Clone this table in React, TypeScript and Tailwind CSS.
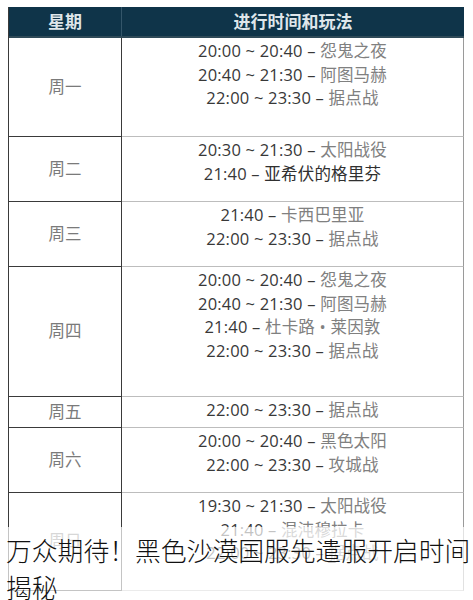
const font = { fontFamily: '"Open Sans", "Noto Sans CJK SC", sans-serif' };

type Line = { time: string; name: string; strong?: boolean };
type Row = { day: string; h: string; lines: Line[] };

const rows: Row[] = [
  {
    day: "周一",
    h: "h-[99px]",
    lines: [
      { time: "20:00 ~ 20:40 – ", name: "怨鬼之夜" },
      { time: "20:40 ~ 21:30 – ", name: "阿图马赫" },
      { time: "22:00 ~ 23:30 – ", name: "据点战" },
    ],
  },
  {
    day: "周二",
    h: "h-[65px]",
    lines: [
      { time: "20:30 ~ 21:30 – ", name: "太阳战役" },
      { time: "21:40 – ", name: "亚希伏的格里芬", strong: true },
    ],
  },
  {
    day: "周三",
    h: "h-[65px]",
    lines: [
      { time: "21:40 – ", name: "卡西巴里亚" },
      { time: "22:00 ~ 23:30 – ", name: "据点战" },
    ],
  },
  {
    day: "周四",
    h: "h-[130px]",
    lines: [
      { time: "20:00 ~ 20:40 – ", name: "怨鬼之夜" },
      { time: "20:40 ~ 21:30 – ", name: "阿图马赫" },
      { time: "21:40 – ", name: "杜卡路 • 莱因敦" },
      { time: "22:00 ~ 23:30 – ", name: "据点战" },
    ],
  },
  {
    day: "周五",
    h: "h-[31px]",
    lines: [{ time: "22:00 ~ 23:30 – ", name: "据点战" }],
  },
  {
    day: "周六",
    h: "h-[65px]",
    lines: [
      { time: "20:00 ~ 20:40 – ", name: "黑色太阳" },
      { time: "22:00 ~ 23:30 – ", name: "攻城战" },
    ],
  },
  {
    day: "周日",
    h: "h-[98px]",
    lines: [
      { time: "19:30 ~ 21:30 – ", name: "太阳战役" },
      { time: "21:40 – ", name: "混沌穆拉卡" },
      { time: "22:00 ~ 23:30 – ", name: "据点战" },
    ],
  },
];

export default function App() {
  return (
    <div className="relative w-[473px] h-[600px] overflow-hidden bg-white" style={font}>
      <div className="pl-[8px] pt-[7px]">
        <div className="w-[456px] border-l-[1.5px] border-[#3a3a3a]">
          {/* header */}
          <div className="flex h-[31px] bg-[#0f3449] text-[17px] font-bold text-[#dfe6ea] border-b-[2px] border-[#2f4a58]">
            <div className="w-[113px] flex items-center justify-center border-r border-[#34566a]">星期</div>
            <div className="flex-1 flex items-center justify-center">进行时间和玩法</div>
          </div>

          {rows.map((r) => (
            <div key={r.day} className={`flex ${r.h}`}>
              <div className="w-[113px] flex items-center justify-center border-r-[1.5px] border-b-[1.5px] border-[#3a3a3a] text-[16.5px] text-[#7a7a7a]">
                {r.day}
              </div>
              <div className="flex-1 flex flex-col items-center pt-[1px] border-b-[1.5px] border-r-[1.5px] border-b-[#bdbdbd] border-r-[#9a9a9a] text-[16.5px] leading-[23.5px] tracking-[0.2px]">
                {r.lines.map((l, i) => (
                  <div key={i} className="whitespace-nowrap">
                    <span className="text-[#383838]">{l.time}</span>
                    <span className={l.strong ? "text-[#303030]" : "text-[#808080]"}>{l.name}</span>
                  </div>
                ))}
              </div>
            </div>
          ))}
        </div>
      </div>

      {/* caption over the picture */}
      <div
        className="absolute left-0 right-0 top-[527px] h-[73px] bg-white/70 pl-[6px] pt-[4px] text-[25.8px] leading-[37px] font-light text-[#111]"
        style={{ fontFamily: '"Noto Sans CJK SC", sans-serif' }}
      >
        万众期待！黑色沙漠国服先遣服开启时间揭秘
      </div>
    </div>
  );
}
